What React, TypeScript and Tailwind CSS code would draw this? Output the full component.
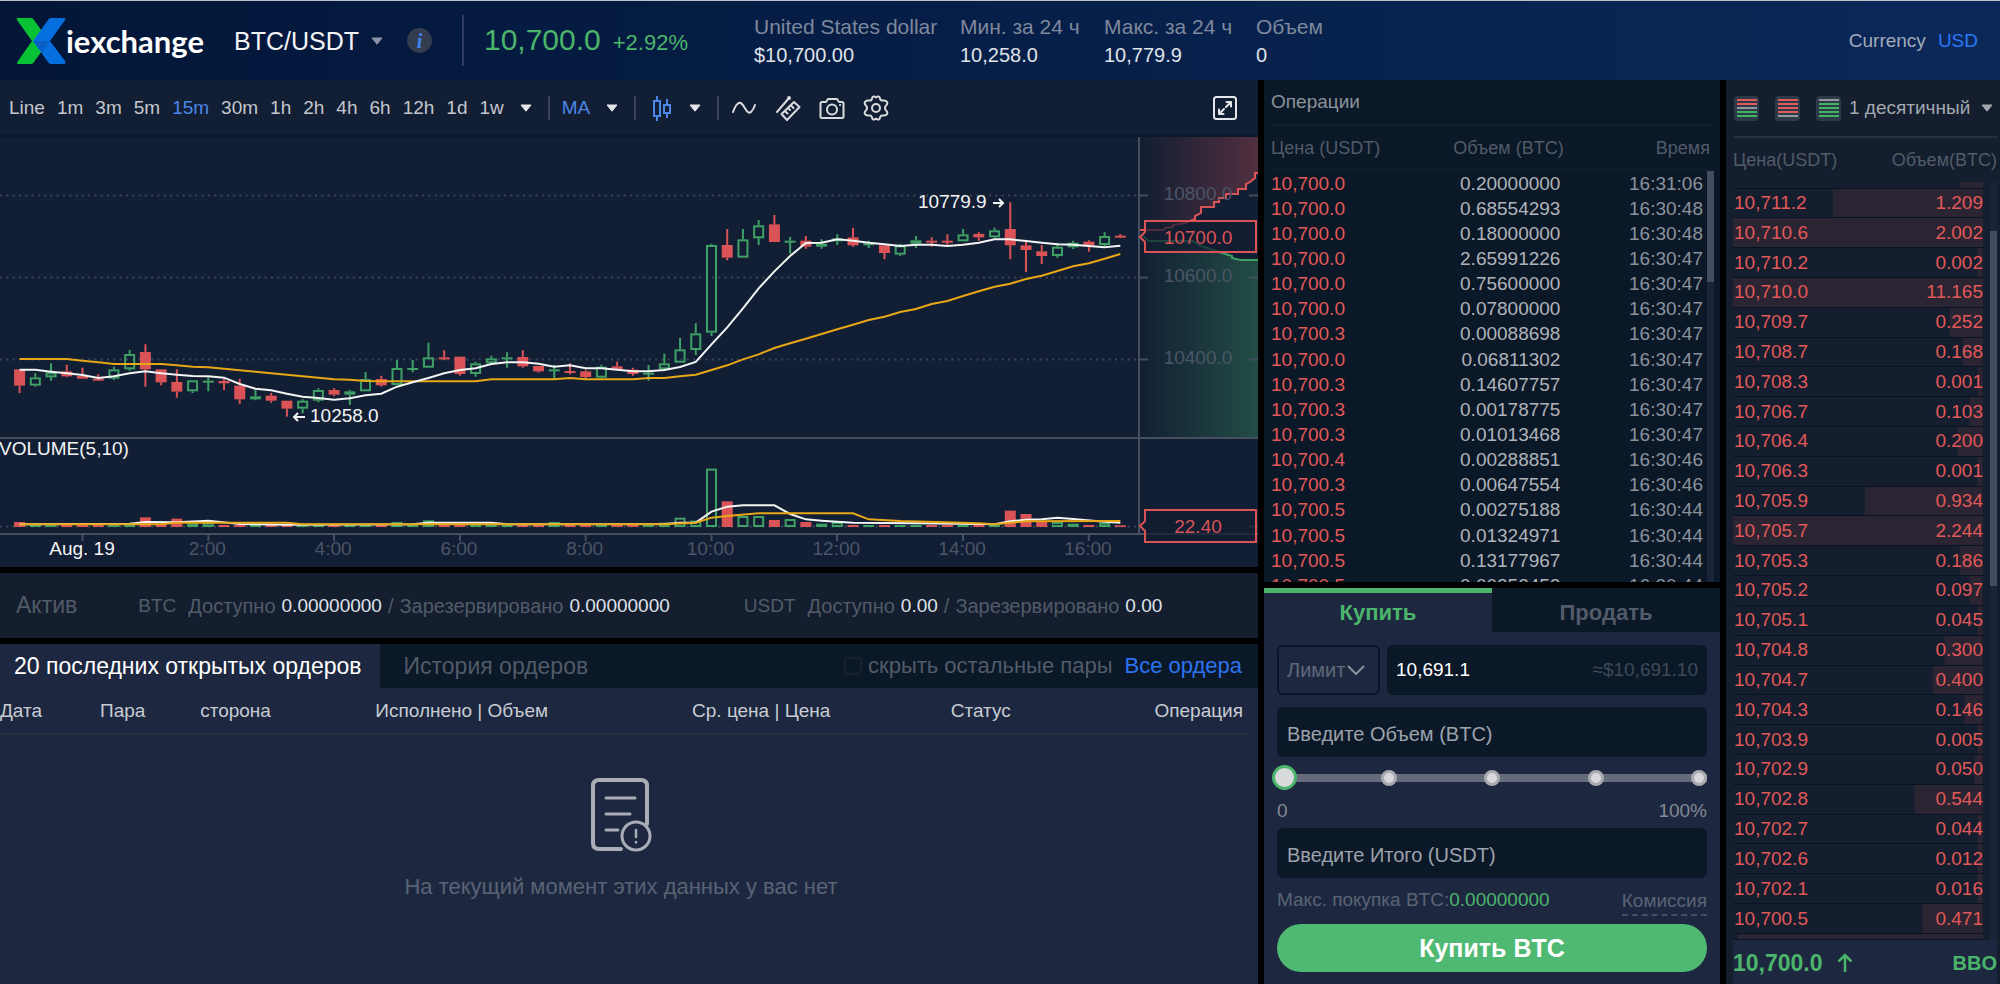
import type { ReactNode } from 'react'

const RED = '#d95357'
const GREEN = '#3fa066'

// [up, body top, body bottom, wick top, wick bottom], in thirds of a pixel
const candles: [number, number, number, number, number][] = [
  [0, 718, 767, 718, 789], [1, 742, 767, 730, 770], [1, 727, 742, 700, 752], [0, 724, 739, 704, 742],
  [0, 738, 746, 713, 746], [0, 746, 751, 733, 752], [1, 718, 746, 710, 750], [1, 672, 718, 660, 722],
  [0, 666, 718, 643, 770], [0, 718, 757, 718, 766], [0, 756, 785, 718, 803], [1, 751, 784, 751, 789],
  [1, 752, 755, 740, 784], [0, 753, 760, 746, 780], [0, 767, 808, 746, 822], [1, 799, 808, 780, 811],
  [0, 797, 812, 789, 818], [0, 812, 836, 812, 860], [1, 812, 836, 808, 850], [1, 780, 812, 775, 817],
  [0, 780, 794, 775, 799], [1, 784, 794, 780, 825], [1, 747, 784, 726, 784], [0, 747, 766, 737, 770],
  [1, 714, 765, 690, 765], [1, 714, 717, 690, 727], [1, 682, 713, 638, 713], [0, 682, 684, 661, 690],
  [0, 680, 732, 680, 737], [1, 700, 732, 695, 740], [1, 685, 700, 677, 704], [1, 682, 684, 667, 713],
  [0, 681, 709, 661, 713], [0, 708, 724, 708, 728], [1, 718, 721, 704, 746], [0, 723, 728, 700, 733],
  [0, 724, 741, 719, 747], [1, 710, 743, 704, 746], [0, 709, 719, 695, 719], [0, 719, 732, 713, 737],
  [1, 728, 732, 705, 752], [1, 700, 718, 671, 720], [1, 658, 698, 624, 698], [1, 610, 660, 580, 675],
  [1, 345, 608, 341, 618], [0, 345, 383, 297, 391], [1, 328, 383, 297, 383], [1, 286, 325, 270, 345],
  [0, 283, 336, 255, 336], [1, 332, 334, 321, 371], [0, 332, 350, 318, 356], [1, 341, 350, 328, 356],
  [1, 325, 334, 313, 345], [0, 322, 346, 293, 350], [1, 340, 345, 332, 354], [0, 346, 369, 341, 388],
  [1, 346, 374, 341, 378], [1, 331, 341, 318, 354], [0, 332, 334, 322, 350], [0, 332, 334, 313, 345],
  [1, 313, 334, 297, 334], [0, 312, 322, 307, 332], [1, 301, 322, 293, 325], [0, 297, 346, 217, 388],
  [0, 346, 360, 335, 426], [0, 364, 378, 345, 402], [1, 350, 378, 338, 383], [1, 338, 352, 332, 357],
  [0, 335, 346, 331, 365], [1, 318, 345, 307, 348], [0, 317, 321, 312, 323],
]

const maFast = [
  719, 719, 725, 730, 735, 744, 739, 730, 724, 730, 734, 738, 739, 743, 762, 776, 781, 791, 800, 804, 809, 805, 796,
  791, 770, 757, 744, 730, 720, 715, 702, 697, 697, 701, 710, 706, 715, 715, 719, 724, 724, 720, 711, 696, 643, 592,
  535, 475, 424, 378, 339, 338, 328, 332, 338, 343, 348, 344, 344, 348, 344, 338, 328, 328, 333, 338, 343, 344, 348,
  352, 347,
]
const maSlow = [
  687, 687, 687, 687, 692, 697, 702, 702, 702, 702, 706, 710, 712, 716, 721, 725, 730, 734, 739, 743, 748, 749, 753,
  754, 754, 754, 754, 754, 754, 754, 748, 748, 748, 748, 748, 744, 748, 748, 748, 748, 744, 744, 739, 734, 720, 706,
  688, 673, 654, 640, 626, 612, 598, 584, 570, 560, 546, 537, 522, 513, 498, 484, 470, 461, 447, 437, 423, 409, 400,
  386, 372,
]

// tops of the taller volume bars, all others are a thin dash
const volumes: Record<number, number> = {
  0: 1176, 8: 1162, 10: 1166, 11: 1180, 12: 1178, 24: 1176, 26: 1171, 34: 1176, 41: 1178, 42: 1163, 43: 1172,
  44: 1016, 45: 1114, 46: 1158, 47: 1158, 48: 1170, 49: 1167, 50: 1176, 51: 1181, 52: 1176, 63: 1142, 64: 1152,
  65: 1176, 66: 1176, 67: 1181, 69: 1178, 70: 1186,
}
const volFast: [number, number][] = [
  [0, 1183], [7, 1181], [8, 1176], [10, 1177], [12, 1172], [14, 1182], [17, 1184], [25, 1183], [26, 1178], [30, 1178],
  [31, 1183], [41, 1182], [42, 1178], [43, 1178], [44, 1145], [45, 1130], [46, 1126], [48, 1126], [49, 1152],
  [50, 1168], [51, 1172], [53, 1178], [57, 1180], [62, 1183], [63, 1174], [64, 1169], [65, 1168], [66, 1163],
  [67, 1167], [69, 1175], [70, 1178],
]
const volSlow: [number, number][] = [
  [0, 1183], [9, 1183], [10, 1178], [17, 1178], [18, 1183], [41, 1183], [43, 1178], [44, 1163], [45, 1158],
  [47, 1150], [53, 1150], [54, 1168], [56, 1173], [61, 1180], [62, 1183], [64, 1174], [70, 1173],
]

const trades = [
  ['10,700.0', '0.20000000', '16:31:06'],
  ['10,700.0', '0.68554293', '16:30:48'],
  ['10,700.0', '0.18000000', '16:30:48'],
  ['10,700.0', '2.65991226', '16:30:47'],
  ['10,700.0', '0.75600000', '16:30:47'],
  ['10,700.0', '0.07800000', '16:30:47'],
  ['10,700.3', '0.00088698', '16:30:47'],
  ['10,700.0', '0.06811302', '16:30:47'],
  ['10,700.3', '0.14607757', '16:30:47'],
  ['10,700.3', '0.00178775', '16:30:47'],
  ['10,700.3', '0.01013468', '16:30:47'],
  ['10,700.4', '0.00288851', '16:30:46'],
  ['10,700.3', '0.00647554', '16:30:46'],
  ['10,700.5', '0.00275188', '16:30:44'],
  ['10,700.5', '0.01324971', '16:30:44'],
  ['10,700.5', '0.13177967', '16:30:44'],
  ['10,700.5', '0.00252452', '16:30:44'],
]

const asks: [string, string, number][] = [
  ['10,711.2', '1.209', 60],
  ['10,710.6', '2.002', 100],
  ['10,710.2', '0.002', 2],
  ['10,710.0', '11.165', 100],
  ['10,709.7', '0.252', 13],
  ['10,708.7', '0.168', 8],
  ['10,708.3', '0.001', 2],
  ['10,706.7', '0.103', 5],
  ['10,706.4', '0.200', 10],
  ['10,706.3', '0.001', 2],
  ['10,705.9', '0.934', 47],
  ['10,705.7', '2.244', 100],
  ['10,705.3', '0.186', 9],
  ['10,705.2', '0.097', 5],
  ['10,705.1', '0.045', 2],
  ['10,704.8', '0.300', 15],
  ['10,704.7', '0.400', 20],
  ['10,704.3', '0.146', 7],
  ['10,703.9', '0.005', 2],
  ['10,702.9', '0.050', 3],
  ['10,702.8', '0.544', 27],
  ['10,702.7', '0.044', 2],
  ['10,702.6', '0.012', 2],
  ['10,702.1', '0.016', 2],
  ['10,700.5', '0.471', 24],
]

const intervals = ['Line', '1m', '3m', '5m', '15m', '30m', '1h', '2h', '4h', '6h', '12h', '1d', '1w']

const depthBar = (pct: number) => ({
  background: `linear-gradient(to left, #2b2432 ${pct}%, transparent ${pct}%)`,
})

const cx = (i: number) => 19.6 + i * 15.725
const cy = (v: number) => v / 3 - 7
const line = (pts: [number, number][]) => pts.map(([i, v]) => `${cx(i)},${cy(v)}`).join(' ')

function Caret({ className = '' }: { className?: string }) {
  return (
    <svg viewBox="0 0 12 8" className={`h-2 w-3 shrink-0 ${className}`} aria-hidden="true">
      <path d="M1 1h10L6 7.2z" fill="currentColor" stroke="currentColor" strokeLinejoin="round" />
    </svg>
  )
}

function Divider() {
  return <span className="h-6 w-[2px] bg-[#3a4356]" />
}

function Header() {
  const stats = [
    ['United States dollar', '$10,700.00'],
    ['Мин. за 24 ч', '10,258.0'],
    ['Макс. за 24 ч', '10,779.9'],
    ['Объем', '0'],
  ]
  return (
    <header className="flex h-20 shrink-0 items-center border-t border-[#b9c2c6] bg-linear-to-r from-[#031638] to-[#0b2859] pl-4">
      <a href="#" className="flex items-center text-white">
        <svg viewBox="0 0 50 48" className="h-12 w-[50px]" aria-hidden="true">
          <path d="M2 1h13q2 0 3 2l15 21-15 21q-1 2-3 2H2q-2 0 0-3l14-20L1 3q-1-2 1-2z" fill="#08c135" />
          <path d="M48 1H35q-2 0-3 2L17 24l15 21q1 2 3 2h13q2 0 1-3L34 24 49 3q1-2-1-2z" fill="#066fe0" />
          <path d="M17 24h17l-8 12z" fill="#0a5fc4" />
        </svg>
        <span className="font-[Lato,sans-serif] text-[31px] leading-9 font-bold">iexchange</span>
      </a>
      <button className="ml-[30px] flex items-center gap-3 text-[25px] leading-8 text-gray-100">
        BTC/USDT
        <Caret className="text-[#8a93a8]" />
      </button>
      <button
        aria-label="Информация"
        className="ml-6 size-[25px] rounded-full bg-[#343c50] font-['Liberation_Serif',serif] text-xl leading-6 font-bold text-[#3f83f5] italic"
      >
        i
      </button>
      <span className="ml-[30px] h-[51px] w-[2px] bg-[#2f3d5e]" />
      <div className="ml-5 flex items-baseline gap-3 text-[#4bb56b]">
        <span className="text-3xl">10,700.0</span>
        <span className="text-[22px]">+2.92%</span>
      </div>
      <dl className="ml-[66px] grid grid-cols-[206px_144px_152px_auto] text-xl leading-7">
        {stats.map(([label, value]) => (
          <div key={label}>
            <dt className="text-[21px] text-[#7f889c]">{label}</dt>
            <dd className="text-[#dfe2e8]">{value}</dd>
          </div>
        ))}
      </dl>
      <div className="mr-[22px] ml-auto flex gap-3 text-[19px] leading-6">
        <span className="text-[#a3abba]">Currency</span>
        <button className="text-[#2b78f5]">USD</button>
      </div>
    </header>
  )
}

function ToolIcon({ label, children }: { label: string; children: ReactNode }) {
  return (
    <button aria-label={label}>
      <svg viewBox="0 0 26 26" className="size-[26px]" fill="none" stroke="currentColor" strokeWidth="2" strokeLinejoin="round" strokeLinecap="round">
        {children}
      </svg>
    </button>
  )
}

function Toolbar() {
  return (
    <div className="flex h-[57px] shrink-0 items-center border-b-2 border-[#0d1829] pr-5 pl-[9px] text-[19px] leading-6 text-[#c3c7ce]">
      <div className="flex gap-3">
        {intervals.map((name) => (
          <button key={name} className={name === '15m' ? 'text-[#4b87e8]' : ''}>
            {name}
          </button>
        ))}
      </div>
      <button aria-label="Другие интервалы" className="mx-4 flex text-[#e4e6ea]">
        <Caret />
      </button>
      <Divider />
      <button className="mr-4 ml-3 flex items-center gap-4 text-[#4b87e8]">
        MA
        <Caret className="text-[#e4e6ea]" />
      </button>
      <Divider />
      <button aria-label="Тип графика" className="mr-4 ml-[15px] flex items-center gap-4">
        <svg viewBox="0 0 22 26" className="h-[26px] w-[22px]" fill="none" stroke="#4b87e8" strokeWidth="2">
          <path d="M3 6h6v15H3zM6 1v5M6 21v5M13 10h6v8h-6zM16 4v6M16 18v5" />
        </svg>
        <Caret className="text-[#e4e6ea]" />
      </button>
      <Divider />
      <div className="ml-3 flex gap-[18px] text-[#d9dbdf]">
        <ToolIcon label="Индикатор">
          <path d="M2 17C5 9 8 6 11 9s5 11 9 8c2-2 3-4 4-7" />
        </ToolIcon>
        <ToolIcon label="Линейка">
          <path d="M2 17 14 3" />
          <circle cx="14" cy="3" r="1" />
          <path d="M6.500 19 19 7l5.500 5L12 25z" />
          <path d="m10 16 2.500 2.500M13 13l2 2M16 10.500l2.500 2.500" />
        </ToolIcon>
        <ToolIcon label="Снимок">
          <path d="M3 7h4l2-3h9l2 3h3q1.500 0 1.500 1.500v13Q24.500 23 23 23H3q-1.500 0-1.500-1.500v-13Q1.500 7 3 7z" />
          <circle cx="13" cy="14.500" r="5" />
          <path d="M21 10h.1" />
        </ToolIcon>
        <ToolIcon label="Настройки">
          <path d="M9 3.500Q9.500 1 11.500 1.500L13 2.500l1.500-1Q16.500 1 17 3.500q.5 2.500 3 2 3-.5 4 1.500 1 2-1 3.500-2 2.500 0 5 2 1.500 1 3.500-1 2-4 1.500-2.500-.5-3 2-.5 2.500-2.500 2L13 23.500l-1.500 1Q9.500 25 9 22.500q-.5-2.500-3-2-3 .5-4-1.500-1-2 1-3.500 2-2.500 0-5Q1 9 2 7q1-2 4-1.500 2.500.5 3-2z" />
          <circle cx="13" cy="13" r="4" />
        </ToolIcon>
      </div>
      <div className="ml-auto flex text-[#e4e6ea]">
        <ToolIcon label="На весь экран">
          <rect x="2" y="2" width="22" height="22" rx="2.500" />
          <path d="M14.500 7H19v4.500M19 7l-5 5M11.500 19H7v-4.500M7 19l5-5" />
        </ToolIcon>
      </div>
    </div>
  )
}

function Chart() {
  const hours = ['2:00', '4:00', '6:00', '8:00', '10:00', '12:00', '14:00', '16:00']
  const redEdge =
    'M1139 93H1164L1165 91 1173 90V88L1185 86 1195 82V79L1201 76V70H1214V65H1219V61H1226V57H1238V52H1246V47L1250 45 1255 41V36H1258'
  const greenEdge = 'M1143 99 1149 104H1193L1199 108 1210 112 1222 116 1232 119V121L1236 122 1240 123H1258'
  return (
    <svg viewBox="0 0 1258 430" className="block w-full shrink-0 text-[19px]" role="img" aria-label="BTC/USDT">
      <defs>
        <linearGradient id="sell">
          <stop offset="0" stopColor={RED} stopOpacity="0" />
          <stop offset="1" stopColor={RED} stopOpacity=".32" />
        </linearGradient>
        <linearGradient id="buy">
          <stop offset="0" stopColor={GREEN} stopOpacity="0" />
          <stop offset="1" stopColor={GREEN} stopOpacity=".36" />
        </linearGradient>
      </defs>

      <path d="M0 58.500H1139M0 140.500H1139M0 222.500H1139M0 389.500H1139" stroke="#3b4556" strokeWidth="2" strokeDasharray="2 4.300" />

      <path d={`${redEdge}V0H1139z`} fill="url(#sell)" />
      <path d={`${greenEdge}V300H1139V99z`} fill="url(#buy)" />
      <path d={redEdge} fill="none" stroke={RED} strokeWidth="2" />
      <path d={greenEdge} fill="none" stroke={GREEN} strokeWidth="2" />

      <path d="M0 301H1258M0 397H1258" stroke="#454f60" strokeWidth="2" />
      <path d="M1139 0V397M1139 58.500h9M1139 140.500h9M1139 222.500h9M1249 58.500h9M1249 140.500h9M1249 222.500h9M1249 389.500h9" stroke="#454f60" strokeWidth="2" />

      {candles.map(([up, top, bottom, high, low], i) => {
        const x = cx(i)
        const color = up ? GREEN : RED
        const height = Math.max(2, (bottom - top) / 3)
        const volTop = cy(volumes[i] ?? 1185)
        const volHeight = cy(1191) - volTop
        const hollow = up && height > 4
        const volHollow = up && volHeight > 4
        return (
          <g key={i} stroke={color} strokeWidth="2">
            <path d={`M${x} ${cy(high)}V${cy(top)}M${x} ${cy(bottom)}V${cy(low)}`} />
            {hollow ? (
              <rect x={x - 4.5} y={cy(top) + 1} width="9" height={height - 2} fill="none" />
            ) : (
              <rect x={x - 5.5} y={cy(top)} width="11" height={height} fill={color} stroke="none" />
            )}
            {volHollow ? (
              <rect x={x - 4.5} y={volTop + 1} width="9" height={volHeight - 2} fill="none" />
            ) : (
              <rect x={x - 5.5} y={volTop} width="11" height={volHeight} fill={color} stroke="none" />
            )}
          </g>
        )
      })}

      <g fill="none" strokeWidth="2">
        <polyline points={line(maSlow.map((v, i) => [i, v]))} stroke="#e8a717" />
        <polyline points={line(maFast.map((v, i) => [i, v]))} stroke="#f3f4f4" />
        <polyline points={line(volFast)} stroke="#f3f4f4" />
        <polyline points={line(volSlow)} stroke="#e8a717" />
      </g>

      <g fill="#f3f4f6">
        <text x="918" y="71">10779.9</text>
        <text x="310" y="285">10258.0</text>
        <text x="-1" y="318">VOLUME(5,10)</text>
        <text x="82" y="418" textAnchor="middle">Aug. 19</text>
      </g>
      <path d="M993 66h10m-4-4 4 4-4 4M305 280h-11m4-4-4 4 4 4" fill="none" stroke="#f3f4f6" strokeWidth="2" />

      <g fill="#4b5567" textAnchor="middle">
        {hours.map((hour, i) => (
          <text key={hour} x={cx(12 + i * 8) - 1} y="418">
            {hour}
          </text>
        ))}
        <text x="1198" y="63">10800.0</text>
        <text x="1198" y="145">10600.0</text>
        <text x="1198" y="227">10400.0</text>
      </g>
      <path d="M82.500 398v6M208.300 398v6M334 398v6M460 398v6M585.600 398v6M711.500 398v6M837 398v6M963 398v6M1088.800 398v6" stroke="#454f60" strokeWidth="2" />

      <g fill="#121d31" fillOpacity=".7" stroke={RED} strokeWidth="2">
        <path d="M1145 84H1256V115H1145V105L1140 100 1145 95z" />
        <path d="M1145 373H1256V405H1145V394L1140 389 1145 384z" />
      </g>
      <g fill={RED} textAnchor="middle">
        <text x="1198" y="107">10700.0</text>
        <text x="1198" y="396">22.40</text>
      </g>
    </svg>
  )
}

function Balance({ asset, available, reserved }: { asset: string; available: string; reserved: string }) {
  return (
    <div className="flex gap-[6px] text-xl leading-6">
      <span className="mr-[6px] text-[19px]">{asset}</span>
      <span>Доступно</span>
      <span className="text-[19px] text-[#dfe2e8]">{available}</span>
      <span>/</span>
      <span>Зарезервировано</span>
      <span className="text-[19px] text-[#dfe2e8]">{reserved}</span>
    </div>
  )
}

function Orders() {
  return (
    <section className="flex min-h-0 flex-1 flex-col bg-[#1d2840]">
      <div className="flex h-11 shrink-0 items-center bg-[#0b1827] pr-4 text-[22px] leading-7">
        <button className="h-full bg-[#1d2840] pr-[18px] pl-[14px] text-[23px] text-white">
          20 последних открытых ордеров
        </button>
        <button className="ml-6 text-[23px] text-[#525b69]">История ордеров</button>
        <label className="ml-auto flex items-center gap-[6px] text-[#525b69]">
          <input type="checkbox" className="size-[18px] appearance-none rounded-sm border-2 border-[#182332]" />
          скрыть остальные пары
        </label>
        <a href="#" className="ml-3 text-[#2b73f0]">
          Все ордера
        </a>
      </div>
      <div className="pr-[7px]">
        <table className="w-full table-fixed border-b-2 border-[#22303d] text-left text-[19px] leading-6 text-[#c8ccd3]">
          <thead>
            <tr className="h-[46px] [&>th]:font-normal [&>th]:whitespace-nowrap">
              <th className="w-[8%]">Дата</th>
              <th className="w-[8%]">Пара</th>
              <th className="w-[14%]">сторона</th>
              <th className="w-[25%]">Исполнено | Объем</th>
              <th className="w-[21%] pl-1">Ср. цена | Цена</th>
              <th>Статус</th>
              <th className="pr-2 text-right">Операция</th>
            </tr>
          </thead>
        </table>
      </div>
      <div className="flex flex-col items-center pt-[42px] pr-4">
        <svg viewBox="0 0 62 76" className="h-[76px] w-[62px]" fill="none" stroke="#a9adb6" strokeWidth="4" strokeLinecap="round">
          <path d="M31 72H9q-6 0-6-6V9q0-6 6-6h42q6 0 6 6v38" />
          <path d="M16 21h29M16 37h24M16 53h12" strokeWidth="3" />
          <circle cx="46" cy="59" r="14" strokeWidth="3" fill="#1d2840" />
          <path d="M46 53v7M46 65v.5" strokeWidth="2.500" />
        </svg>
        <p className="mt-[18px] text-[22px] leading-8 text-[#5a6374]">На текущий момент этих данных у вас нет</p>
      </div>
    </section>
  )
}

function Trades() {
  return (
    <section className="flex min-h-0 flex-1 flex-col bg-[#0b1827] pr-[6px] pl-[7px] text-[19px] leading-6">
      <h2 className="h-[46px] border-b-2 border-[#121f2e] pt-[10px] text-[#8b929c]">Операции</h2>
      <div className="flex h-[45px] items-center border-b-2 border-[#0f1c2c] pr-1 text-lg text-[#525b69]">
        <span className="flex-1">Цена (USDT)</span>
        <span className="flex-1 pl-9 text-center">Объем (BTC)</span>
        <span className="flex-1 text-right">Время</span>
      </div>
      <div className="flex min-h-0 flex-1 gap-1">
        <div className="flex-1 overflow-hidden">
          <table className="h-[104%] w-full table-fixed">
            <tbody>
              {trades.map(([price, amount, time], i) => (
                <tr key={i} className="[&>td]:p-0">
                  <td className="w-[30%] text-[#e15958]">{price}</td>
                  <td className="w-[37%] text-right text-[#b0b4ba]">{amount}</td>
                  <td className="text-right text-[#8b929c]">{time}</td>
                </tr>
              ))}
            </tbody>
          </table>
        </div>
        <div className="w-[7px] bg-[#1a2438]">
          <div className="h-[27%] bg-[#434d60]" />
        </div>
      </div>
    </section>
  )
}

function TradeForm() {
  const field = 'h-[50px] w-full rounded-md bg-[#0b1827] px-[10px] pt-1 text-xl placeholder:text-[#9da3ad]'
  return (
    <form className="bg-[#1d2840] text-[19px] leading-6">
      <div className="flex h-11 text-[22px] font-bold">
        <button type="button" className="flex-1 border-t-[5px] border-[#4bb56b] text-[#4bb56b]">
          Купить
        </button>
        <button type="button" className="flex-1 bg-[#0b1827] pt-[5px] text-[#525b69]">
          Продать
        </button>
      </div>
      <div className="flex flex-col px-[13px] pt-[13px] pb-3">
        <div className="flex gap-[7px]">
          <div className="relative w-[103px] shrink-0">
            <select aria-label="Тип ордера" className="h-[50px] w-full appearance-none rounded-md border-2 border-[#0a1428] bg-transparent pl-2 text-xl leading-6 text-[#5f6878]">
              <option>Лимит</option>
            </select>
            <svg viewBox="0 0 18 10" className="pointer-events-none absolute top-5 right-[15px] h-[10px] w-[18px]" fill="none" stroke="#8b929c" strokeWidth="2">
              <path d="m1 1 8 8 8-8" />
            </svg>
          </div>
          <label className="flex h-[50px] min-w-0 flex-1 items-center rounded-md bg-[#0b1827] px-[9px] text-[#3f4958]">
            <input aria-label="Цена" defaultValue="10,691.1" className="min-w-0 flex-1 text-white" />
            <span>≈$10,691.10</span>
          </label>
        </div>
        <input aria-label="Объем" placeholder="Введите Объем (BTC)" className={`${field} mt-3`} />
        <div className="relative mt-2 flex h-[25px] items-center">
          <div className="h-2 w-full bg-[#666b7b]" />
          <div className="absolute inset-x-0 flex justify-between">
            {[0, 25, 50, 75, 100].map((step) => (
              <span key={step} className="size-4 rounded-full border-[3px] border-[#a9abb0] bg-[#d6d8db]" />
            ))}
          </div>
          <input
            type="range"
            aria-label="Доля баланса"
            defaultValue="0"
            className="absolute -inset-x-[5px] h-[25px] appearance-none bg-transparent [&::-webkit-slider-thumb]:size-[25px] [&::-webkit-slider-thumb]:appearance-none [&::-webkit-slider-thumb]:rounded-full [&::-webkit-slider-thumb]:border-[3px] [&::-webkit-slider-thumb]:border-[#4bb56b] [&::-webkit-slider-thumb]:bg-[#d9dadc]"
          />
        </div>
        <div className="mt-[9px] flex justify-between text-[#838994]">
          <span>0</span>
          <span>100%</span>
        </div>
        <input aria-label="Итого" placeholder="Введите Итого (USDT)" className={`${field} mt-[5px]`} />
        <div className="mt-[10px] flex justify-between text-[#5a6374]">
          <span>
            Макс. покупка BTC:<span className="text-[#4bb56b]">0.00000000</span>
          </span>
          <button type="button" className="border-b-2 border-dashed border-[#454f60] leading-[26px]">
            Комиссия
          </button>
        </div>
        <button type="button" className="mt-2 h-12 rounded-full bg-[#4fb873] text-[25px] font-bold text-white">
          Купить BTC
        </button>
      </div>
    </form>
  )
}

function BookIcon({ label, colors }: { label: string; colors: string[] }) {
  return (
    <button aria-label={label} className="flex size-[25px] flex-col items-center justify-center gap-[2px] rounded bg-[#2f3a49]">
      {colors.map((color, i) => (
        <span key={i} className={`h-[2px] w-5 ${color}`} />
      ))}
    </button>
  )
}

function OrderBook() {
  const r = 'bg-[#e15958]'
  const g = 'bg-[#3fb463]'
  const n = 'bg-[#9298a0]'
  return (
    <section className="flex min-h-0 w-[274px] shrink-0 flex-col bg-[#141e2e] pr-[3px] pl-[7px] text-[19px] leading-6">
      <div className="flex h-[58px] shrink-0 items-center border-b-2 border-[#27303f]">
        <div className="flex gap-4 pl-[1px]">
          <BookIcon label="Все ордера" colors={[r, r, n, g, g]} />
          <BookIcon label="Продажа" colors={[r, r, r, r, n]} />
          <BookIcon label="Покупка" colors={[n, g, g, g, g]} />
        </div>
        <div className="ml-2 flex flex-1 items-center justify-between pr-1 text-[#a3a8b0]">
          <select aria-label="Точность" className="min-w-0 appearance-none">
            <option>1 десятичный</option>
          </select>
          <Caret />
        </div>
      </div>
      <div className="flex h-11 shrink-0 items-center justify-between text-lg text-[#525b69]">
        <span>Цена(USDT)</span>
        <span>Объем(BTC)</span>
      </div>
      <div className="flex min-h-0 flex-1 gap-[7px]">
        <table className="h-full flex-1 border-collapse text-[#e15958]">
          <tbody className="[&>tr]:border-b [&>tr]:border-[#071222]">
            <tr className="h-[6px]" style={depthBar(9)}>
              <td colSpan={2} className="p-0" />
            </tr>
            {asks.map(([price, amount, pct]) => (
              <tr key={price} style={depthBar(pct)}>
                <td className="p-0 pl-[1px]">{price}</td>
                <td className="p-0 text-right">{amount}</td>
              </tr>
            ))}
            <tr className="h-[6px]" style={depthBar(98)}>
              <td colSpan={2} className="p-0" />
            </tr>
          </tbody>
        </table>
        <div className="w-[7px] bg-[#1a2438] pt-[49px]">
          <div className="h-[50%] bg-[#434d60]" />
        </div>
      </div>
      <div className="flex h-11 shrink-0 items-center bg-[#1d2840] pt-[2px] font-bold text-[#4bb56b]">
        <span className="text-[23px]">10,700.0</span>
        <svg viewBox="0 0 16 20" className="ml-[14px] h-5 w-4" fill="none" stroke="currentColor" strokeWidth="2.500">
          <path d="M8 19V2M1.500 8.500 8 2l6.500 6.500" />
        </svg>
        <button className="ml-auto text-xl">BBO</button>
      </div>
    </section>
  )
}

export default function App() {
  return (
    <div className="flex h-screen flex-col overflow-hidden bg-black font-['Liberation_Sans',Arial,sans-serif]">
      <Header />
      <main className="flex min-h-0 flex-1 gap-[6px]">
        <div className="flex min-w-0 flex-1 flex-col gap-[6px]">
          <section className="bg-[#121e33]">
            <Toolbar />
            <Chart />
          </section>
          <section className="flex h-[65px] shrink-0 items-center bg-[#141e2e] pl-4 text-[#525b69]">
            <h2 className="mr-[61px] text-[23px]">Актив</h2>
            <Balance asset="BTC" available="0.00000000" reserved="0.00000000" />
            <div className="w-[74px]" />
            <Balance asset="USDT" available="0.00" reserved="0.00" />
          </section>
          <Orders />
        </div>
        <div className="flex w-[456px] shrink-0 flex-col gap-[6px]">
          <Trades />
          <TradeForm />
        </div>
        <OrderBook />
      </main>
    </div>
  )
}
